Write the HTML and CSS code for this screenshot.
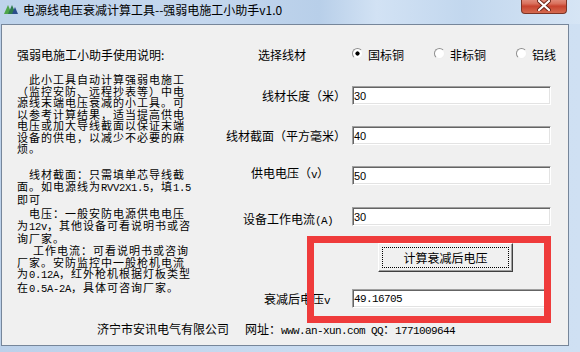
FILE: index.html
```html
<!DOCTYPE html>
<html lang="zh-CN">
<head>
    <meta charset="UTF-8">
    <title>电源线电压衰减计算工具</title>
    <link rel="stylesheet" href="styles.css">
</head>
<body>
    <div class="window">
        <div class="titlebar">
            <svg class="app-icon" width="14" height="10" viewBox="0 0 14 10">
                <polygon points="0,10 4,1 8,10" fill="#4fa64a"/>
                <polygon points="4,10 8,1 12,10" fill="#2e7a4e"/>
                <polygon points="8,10 11,3 14,10" fill="#2b4d8c"/>
            </svg>
            <span class="title">电源线电压衰减计算工具--强弱电施工小助手v1.0</span>
            <div class="close">
                <svg width="14" height="11" viewBox="0 0 14 11">
                    <path d="M2 1 L12 10 M12 1 L2 10" stroke="#6b2418" stroke-width="4" stroke-linecap="round"/>
                    <path d="M2 1 L12 10 M12 1 L2 10" stroke="#ffffff" stroke-width="2.2" stroke-linecap="round"/>
                </svg>
            </div>
        </div>

        <div class="client">
            <div class="main">
                <div class="notes">
                    <p class="head">强弱电施工小助手使用说明:</p>
                    <p class="para p1">此小工具自动计算强弱电施工<br>（监控安防、远程抄表等）中电<br>源线末端电压衰减的小工具。可<br>以参考计算结果，适当提高供电<br>电压或加大导线截面以保证末端<br>设备的供电，以减少不必要的麻<br>烦。</p>
                    <p class="para p2">线材截面：只需填单芯导线截<br>面。如电源线为<span class="en">RVV2X1.5</span>，填<span class="en">1.5</span><br>即可</p>
                    <p class="para p3">电压：一般安防电源供电电压<br>为<span class="en">12v</span>，其他设备可看说明书或咨<br>询厂家。</p>
                    <p class="para p4">工作电流：可看说明书或咨询<br>厂家。安防监控中一般枪机电流<br>为<span class="en">0.12A</span>，红外枪机根据灯板类型<br>在<span class="en">0.5A-2A</span>，具体可咨询厂家。</p>
                </div>

                <div class="form">
                    <div class="row row-pick">
                        <span class="lbl lbl-pick">选择线材</span>
                        <div class="radios">
                            <span class="opt"><span class="radio on"></span>国标铜</span>
                            <span class="opt"><span class="radio"></span>非标铜</span>
                            <span class="opt"><span class="radio"></span>铝线</span>
                        </div>
                    </div>
                    <div class="row row-first">
                        <span class="lbl">线材长度（米）</span>
                        <input class="field" type="text" value="30">
                    </div>
                    <div class="row">
                        <span class="lbl">线材截面（平方毫米）</span>
                        <input class="field" type="text" value="40">
                    </div>
                    <div class="row">
                        <span class="lbl lbl-volt">供电电压（<span class="en">v</span>）</span>
                        <input class="field" type="text" value="50">
                    </div>
                    <div class="row">
                        <span class="lbl lbl-cur">设备工作电流<span class="en">(A)</span></span>
                        <input class="field" type="text" value="30">
                    </div>
                    <div class="row row-btn">
                        <span></span>
                        <button class="calc"><span class="focus">计算衰减后电压</span></button>
                    </div>
                    <div class="row row-out">
                        <span class="lbl lbl-out">衰减后电压<span class="en">v</span></span>
                        <input class="field field-out" type="text" value="49.16705">
                    </div>
                </div>
            </div>

            <div class="footer">
                <span class="company">济宁市安讯电气有限公司</span>
                <span class="site">网址：<span class="en">www.an-xun.com QQ</span>：<span class="en">1771009644</span></span>
            </div>

            <div class="mark"></div>
        </div>
    </div>
</body>
</html>
```

FILE: styles.css
```css
body {
    margin: 0;
    font-family: "Noto Sans CJK SC", sans-serif;
    font-size: 12px;
    color: #000;
    background: #c6d9ee;
}
.window {
    width: 580px;
    height: 352px;
    display: flex;
    flex-direction: column;
    background: linear-gradient(to right, #bcd1ea, #c8dbf0 50%, #cfe0f3);
    overflow: hidden;
}
.titlebar {
    height: 24px;
    flex: none;
    display: flex;
    align-items: flex-start;
    background: linear-gradient(to right, #bed3eb 0%, #c4d7ee 35%, #b8cfe9 55%, #d2e2f4 65%, #c2d7ee 80%, #d6e5f5 100%);
}
.app-icon {
    margin: 4px 5px 0 4px;
}
.title {
    margin-top: 3px;
    line-height: 13px;
    white-space: nowrap;
}
.close {
    margin: -4px 13px 0 auto;
    width: 46px;
    height: 18px;
    box-sizing: border-box;
    border: 1px solid #7b3426;
    border-top: none;
    border-radius: 0 0 4px 4px;
    background: linear-gradient(to bottom, #e9a799 0%, #d9705c 45%, #c8432e 60%, #d46a50 100%);
    display: flex;
    align-items: center;
    justify-content: center;
    padding-top: 1px;
}
.client {
    flex: 1;
    margin: 0 11px 6px 1px;
    border: 1px solid #76869a;
    background: #f0f0f0;
    position: relative;
}
.main {
    display: flex;
}
.en {
    font-family: "Liberation Mono", monospace;
    font-size: 11px;
    letter-spacing: -0.6px;
}

/* left column: instructions */
.notes {
    width: 183px;
    padding: 24px 0 0 15px;
    white-space: nowrap;
}
.notes p {
    margin: 0;
}
.head {
    line-height: 12px;
}
.para {
    font-size: 11px;
    letter-spacing: 1px;
    line-height: 11.5px;
    text-indent: 12px;
}
.para .en {
    font-size: 10.5px;
    letter-spacing: -0.3px;
}
.p1 { margin-top: 13px !important; }
.p2 { margin-top: 14.5px !important; }
.p3 { margin-top: 2.5px !important; }
.p4 { margin-top: 0.5px !important; text-indent: 16px; }

/* right column: form */
.form {
    padding-top: 20px;
}
.row {
    display: grid;
    grid-template-columns: 146px 199px;
    column-gap: 6px;
    align-items: center;
    height: 19px;
    margin-top: 21px;
}
.row-pick { margin-top: 0; }
.row-first { margin-top: 22px; }
.row-btn { height: 29px; margin-top: 18px; }
.row-out { margin-top: 17px; }
.lbl {
    text-align: right;
    white-space: nowrap;
    line-height: 12px;
}
.lbl-pick { padding-right: 40px; margin-top: 1px; }
.lbl-volt { padding-right: 17px; margin-bottom: 4px; }
.lbl-cur { padding-right: 13px; margin-top: 7px; }
.lbl-out { padding-right: 16px; margin-top: 3px; }
.radios {
    display: flex;
    gap: 30px;
    white-space: nowrap;
}
.opt {
    display: flex;
    align-items: center;
    gap: 5px;
    line-height: 12px;
    white-space: nowrap;
}
.radio {
    flex: none;
    width: 11px;
    height: 11px;
    box-sizing: border-box;
    border-radius: 50%;
    border: 1px solid;
    border-color: #8e8e8e #eeeeee #eeeeee #8e8e8e;
    background: #fff;
    margin-top: -2px;
}
.radio.on {
    background: radial-gradient(circle, #000 0 1.8px, #fff 2.4px);
}
.field {
    width: 199px;
    height: 19px;
    box-sizing: border-box;
    margin: 0;
    padding: 0 1px;
    border: 1px solid;
    border-color: #a0a0a0 #ffffff #ffffff #a0a0a0;
    box-shadow: inset 1px 1px 0 #646464, inset -1px -1px 0 #e3e3e3;
    background: #fff;
    font: 11px "Liberation Sans", sans-serif;
    color: #000;
    outline: none;
}
.field-out {
    font: 11px "Liberation Mono", monospace;
    letter-spacing: -0.6px;
}
.calc {
    width: 135px;
    height: 29px;
    margin: 0 0 0 26px;
    padding: 3px;
    box-sizing: border-box;
    background: #f0f0f0;
    border: 1px solid;
    border-color: #ffffff #404040 #404040 #ffffff;
    box-shadow: inset -1px -1px 0 #a0a0a0;
    font: 12px "Noto Sans CJK SC", sans-serif;
    color: #000;
}
.focus {
    display: block;
    height: 100%;
    box-sizing: border-box;
    border: 1px dotted #000;
    line-height: 19px;
}

/* footer */
.footer {
    display: flex;
    margin-top: 15px;
    line-height: 12px;
    white-space: nowrap;
}
.company {
    margin-left: 95px;
    width: 148px;
}

/* red annotation frame drawn over the result area */
.mark {
    position: absolute;
    left: 305px;
    top: 211px;
    width: 244px;
    height: 87px;
    box-sizing: border-box;
    border: 7px solid #ef3b3b;
}
```
